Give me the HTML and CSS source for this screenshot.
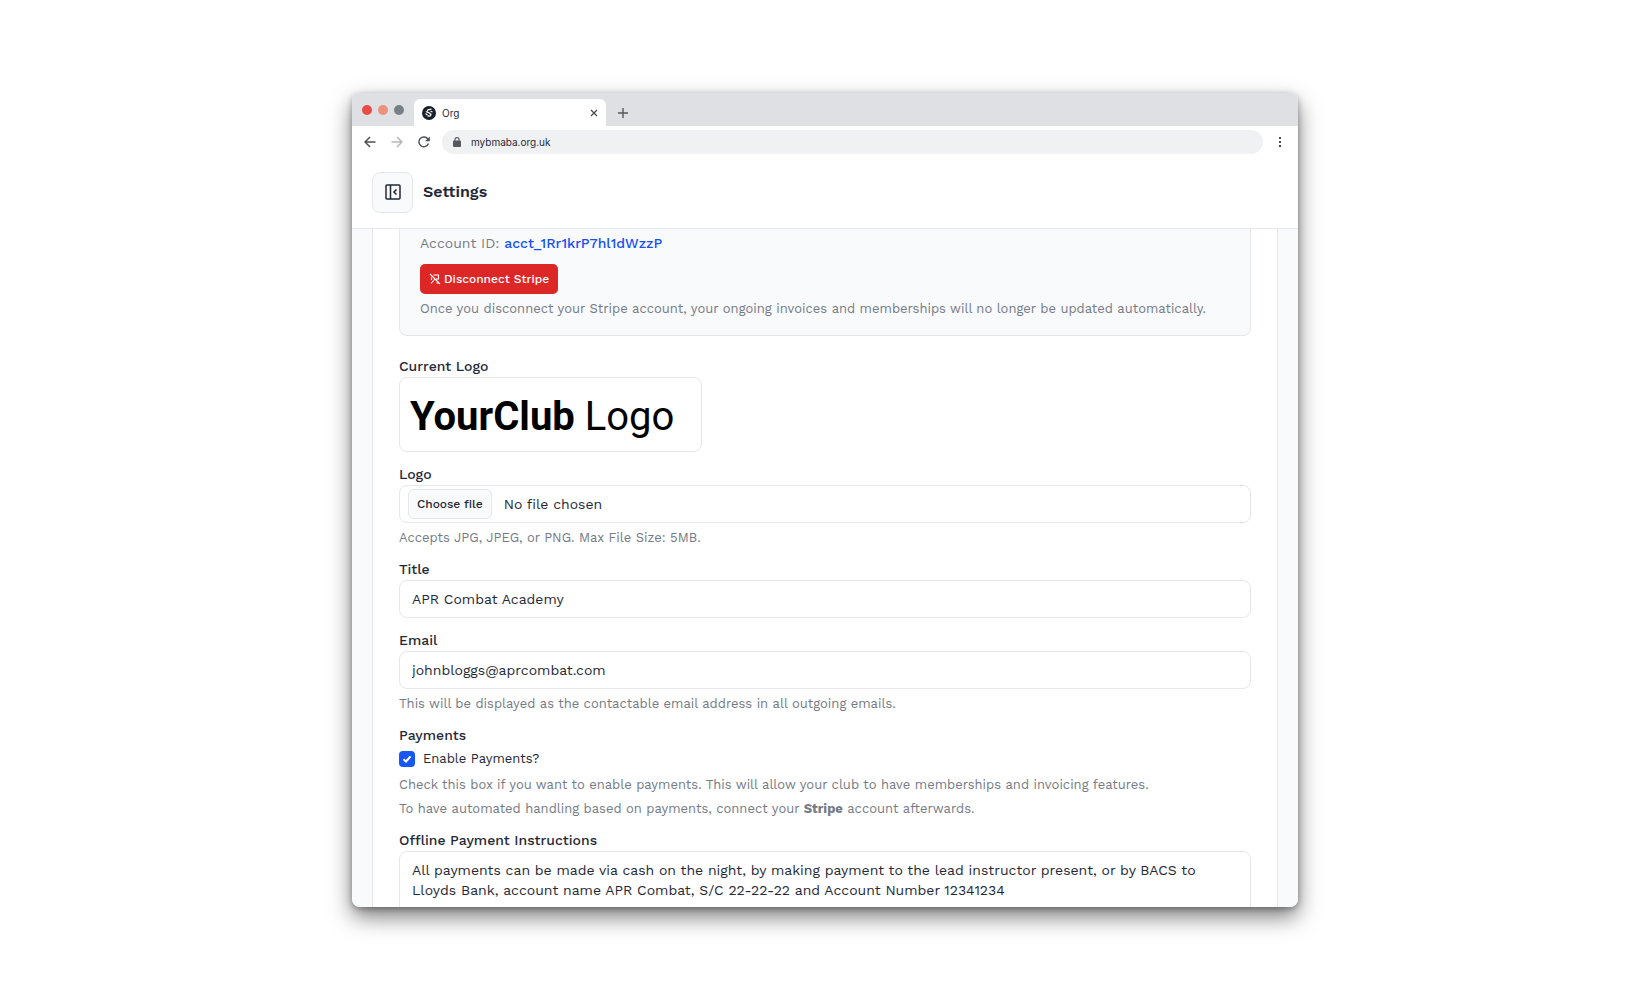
FILE: index.html
```html
<!DOCTYPE html>
<html lang="en">
<head>
<meta charset="utf-8">
<meta name="viewport" content="width=device-width, initial-scale=1">
<title>Settings</title>
<link rel="stylesheet" href="styles.css">
</head>
<body>
<div class="browser">
  <div class="tabs">
    <div class="lights"><span class="light light-close"></span><span class="light light-min"></span><span class="light light-max"></span></div>
    <div class="tab">
      <svg class="favicon" viewBox="0 0 14 14" aria-hidden="true"><circle cx="7" cy="7" r="7" fill="#18202b"/><path d="M9.500 3.200 6 3.800 4.800 6 7.500 7 8.800 8.500 7.500 10.800M3.500 7.500l2 1.800M8.500 5.200l2 .8M5.800 10.500l1-1.200" fill="none" stroke="#fff" stroke-width="1.200"/><path d="M9.500 7.500v2M4 5l-.5 1" stroke="#d96b5c" stroke-width=".8"/></svg>
      <span class="tab-title">Org</span>
      <button class="plain" aria-label="Close tab"><svg width="8" height="8" viewBox="0 0 8 8"><path d="M1 1l6 6M7 1 1 7" stroke="#45494f" stroke-width="1.300"/></svg></button>
    </div>
    <button class="plain new-tab" aria-label="New tab"><svg width="10" height="10" viewBox="0 0 10 10"><path d="M5 0v10M0 5h10" stroke="#55585d" stroke-width="1.400"/></svg></button>
  </div>
  <div class="toolbar">
    <button class="plain" aria-label="Back"><svg width="12" height="12" viewBox="0 0 12 12"><path d="M11.500 6H1.500M6 1 1 6l5 5" fill="none" stroke="#4d5156" stroke-width="1.500"/></svg></button>
    <button class="plain" aria-label="Forward"><svg width="12" height="12" viewBox="0 0 12 12"><path d="M.5 6h10M6 1l5 5-5 5" fill="none" stroke="#b5b8bd" stroke-width="1.500"/></svg></button>
    <button class="plain" aria-label="Reload"><svg width="12" height="12" viewBox="0 0 12 12"><path d="M10.500 7.500A4.900 4.900 0 1 1 9.800 2.900L11 4.200" fill="none" stroke="#4d5156" stroke-width="1.400"/><path d="M11.800.5v4.700H7z" fill="#4d5156"/></svg></button>
    <div class="address">
      <svg width="8" height="10" viewBox="0 0 8 10" aria-hidden="true"><rect y="3.500" width="8" height="6.500" rx="1" fill="#55585d"/><path d="M2 4V2.600a2 2 0 0 1 4 0V4" fill="none" stroke="#55585d" stroke-width="1.100"/></svg>
      <input class="url" type="text" aria-label="Address" value="mybmaba.org.uk">
    </div>
    <button class="plain menu" aria-label="Menu"><svg width="4" height="12" viewBox="0 0 4 12"><path d="M1 1h2v2H1zM1 5h2v2H1zM1 9h2v2H1z" fill="#45494f"/></svg></button>
  </div>

  <header class="header">
    <button class="collapse" aria-label="Collapse sidebar"><svg width="16" height="16" viewBox="0 0 16 16"><rect x="1" y="1" width="14" height="14" rx="1" fill="none" stroke="#1f2937" stroke-width="1.500"/><path d="M5.500 1v14" stroke="#1f2937" stroke-width="1.500"/><path d="M11.500 5.500 9 8l2.500 2.500" fill="none" stroke="#1f2937" stroke-width="1.600"/></svg></button>
    <h1 class="heading">Settings</h1>
  </header>

  <main class="content">
    <form class="panel">
      <section class="stripe">
        <p class="account">Account ID: <a class="account-link" href="#account">acct_1Rr1krP7hl1dWzzP</a></p>
        <button type="button" class="disconnect"><svg width="12" height="12" viewBox="0 0 12 12" aria-hidden="true"><path d="M1 1l10 10M4.500 2H9.500v4H7M5.500 6.500 2 10.500M2.500 4.500V7M7.500 10h2" fill="none" stroke="#fff" stroke-width="1.100"/></svg>Disconnect Stripe</button>
        <p class="hint">Once you disconnect your Stripe account, your ongoing invoices and memberships will no longer be updated automatically.</p>
      </section>

      <div class="field">
        <span class="label">Current Logo</span>
        <div class="logo"><span><b>YourClub</b> Logo</span></div>
      </div>
      <div class="field">
        <label class="label" for="logo">Logo</label>
        <div class="control file">
          <input class="file-input" type="file" id="logo" accept=".jpg,.jpeg,.png">
          <label class="file-button" for="logo">Choose file</label>
          <span>No file chosen</span>
        </div>
        <p class="hint">Accepts JPG, JPEG, or PNG. Max File Size: 5MB.</p>
      </div>
      <div class="field">
        <label class="label" for="title">Title</label>
        <input class="control" type="text" id="title" value="APR Combat Academy">
      </div>
      <div class="field">
        <label class="label" for="email">Email</label>
        <input class="control" type="email" id="email" value="johnbloggs@aprcombat.com">
        <p class="hint">This will be displayed as the contactable email address in all outgoing emails.</p>
      </div>
      <div class="field payments">
        <span class="label">Payments</span>
        <label class="check"><input class="checkbox" type="checkbox" checked>Enable Payments?</label>
        <p class="hint hint-tall">Check this box if you want to enable payments. This will allow your club to have memberships and invoicing features.<br>To have automated handling based on payments, connect your <b>Stripe</b> account afterwards.</p>
      </div>
      <div class="field">
        <label class="label" for="offline">Offline Payment Instructions</label>
        <textarea class="control area" id="offline">All payments can be made via cash on the night, by making payment to the lead instructor present, or by BACS to Lloyds Bank, account name APR Combat, S/C 22-22-22 and Account Number 12341234</textarea>
      </div>
    </form>
  </main>
</div>
</body>
</html>
```
FILE: styles.css
```css
* { box-sizing: border-box; }

body {
  margin: 0;
  padding: 93px 16px;
  height: 100vh;
  background: #fff;
  color: #1f2937;
  font: 14px/20px "Work Sans", Inter, sans-serif;
}

button, input, textarea { font: inherit; color: inherit; }
h1, p { margin: 0; }
svg { display: block; flex: none; }

.plain { padding: 0; border: 0; background: none; }

.browser {
  display: flex;
  flex-direction: column;
  max-width: 946px;
  height: 100%;
  margin: 0 auto;
  overflow: hidden;
  border-radius: 8px;
  background: #fff;
  box-shadow: 0 10px 22px rgba(0, 0, 0, .5), 0 2px 6px rgba(0, 0, 0, .3);
}

/* Browser chrome */
.tabs {
  display: flex;
  align-items: flex-end;
  flex: none;
  height: 33px;
  padding-left: 10px;
  background: #dee0e4;
}
.lights { display: flex; gap: 6px; width: 52px; padding-bottom: 11px; }
.light { width: 10px; height: 10px; border-radius: 50%; }
.light-close { background: #e84c44; }
.light-min { background: #ec917d; }
.light-max { background: #768087; }
.tab {
  display: flex;
  align-items: center;
  gap: 6px;
  width: 192px;
  height: 27px;
  padding: 0 8px;
  border-radius: 6px 6px 0 0;
  background: #fff;
}
.favicon { width: 14px; height: 14px; }
.tab-title { flex: 1; font: 10px/20px Inter, sans-serif; }
.new-tab { padding: 0 0 8px 12px; }
.toolbar {
  display: flex;
  align-items: center;
  gap: 15px;
  flex: none;
  height: 32px;
  padding: 0 16px 0 12px;
}
.address {
  display: flex;
  align-items: center;
  gap: 10px;
  flex: 1;
  height: 24px;
  margin-left: -3px;
  padding: 0 11px;
  border-radius: 12px;
  background: #f0f1f3;
}
.url { flex: 1; padding: 0; border: 0; background: none; font: 10px/20px Inter, sans-serif; }

/* App header */
.header {
  display: flex;
  align-items: center;
  gap: 10px;
  flex: none;
  height: 71px;
  padding: 0 20px 2px;
  border-bottom: 1px solid #e5e7eb;
}
.collapse {
  display: grid;
  place-items: center;
  width: 41px;
  height: 41px;
  padding: 0;
  border: 1px solid #e5e7eb;
  border-radius: 8px;
  background: #f9fafc;
}
.heading { font-size: 16px; font-weight: 600; }

/* Settings form */
.content {
  flex: 1;
  min-height: 0;
  overflow: hidden;
  padding: 0 20px;
  background: #f9fafc;
}
.panel {
  display: flex;
  flex-direction: column;
  gap: 12px;
  padding: 0 26px;
  border: solid #e5e7eb;
  border-width: 0 1px;
  background: #fff;
}
.stripe {
  margin-bottom: 8px;
  padding: 2px 20px 17px;
  border: 1px solid #e5e7eb;
  border-top: 0;
  border-radius: 0 0 8px 8px;
  background: #f9fafc;
}
.account { line-height: 24px; color: #757b86; }
.account-link { color: #1550f0; font-weight: 500; text-decoration: none; }
.disconnect {
  display: flex;
  align-items: center;
  gap: 3px;
  height: 30px;
  margin-top: 9px;
  padding: 0 9px;
  border: 0;
  border-radius: 5px;
  background: #dd2727;
  color: #fff;
  font-size: 12px;
  font-weight: 500;
}
.field { display: flex; flex-direction: column; }
.label { line-height: 21px; font-weight: 500; }
.hint { margin-top: 6px; line-height: 18px; font-size: 13px; color: #757b86; }
.hint-tall { margin-top: 1px; line-height: 24px; }
.payments { margin-bottom: -3px; }
.control {
  width: 100%;
  height: 38px;
  padding: 0 12px;
  border: 1px solid #e5e7eb;
  border-radius: 8px;
  background: #fff;
}
.logo {
  display: flex;
  align-items: center;
  align-self: flex-start;
  width: 303px;
  height: 75px;
  padding: 4px 11px 0 10px;
  border: 1px solid #e5e7eb;
  border-radius: 8px;
  color: #000;
  font: 40px/48px Roboto, sans-serif;
}
.file { display: flex; align-items: center; gap: 12px; padding: 0 8px; }
.file-input { position: absolute; width: 1px; height: 1px; opacity: 0; }
.file-button {
  padding: 4px 8px;
  border: 1px solid #e5e7eb;
  border-radius: 6px;
  background: #f9fafc;
  font-size: 12px;
  font-weight: 500;
}
.check { display: flex; align-items: center; gap: 8px; line-height: 26px; font-size: 13px; }
.checkbox {
  appearance: none;
  width: 16px;
  height: 16px;
  margin: 0;
  border-radius: 4px;
  background: #1857f5 url("data:image/svg+xml,%3Csvg xmlns='http://www.w3.org/2000/svg' viewBox='0 0 16 16'%3E%3Cpath d='M4.500 8.200 7 10.500l4.500-5' fill='none' stroke='white' stroke-width='2'/%3E%3C/svg%3E");
}
.area {
  display: block;
  height: 78px;
  padding: 8px 12px;
  resize: none;
  overflow: hidden;
}
```
